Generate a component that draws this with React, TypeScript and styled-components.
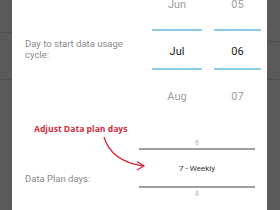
import React from "react";
import styled, { createGlobalStyle } from "styled-components";

const Global = createGlobalStyle`
  html, body { margin: 0; padding: 0; width: 280px; height: 210px; overflow: hidden; }
  body { font-family: Roboto, "Liberation Sans", sans-serif; }
`;

const Page = styled.div`
  display: flex;
  width: 280px;
  height: 210px;
`;

const Strip = styled.div<{ $w: number; $l1: number }>`
  width: ${(p) => p.$w}px;
  flex-shrink: 0;
  background:
    linear-gradient(#4f4f4f, #4f4f4f) 0 ${(p) => p.$l1}px / 100% 1px no-repeat,
    linear-gradient(#4f4f4f, #4f4f4f) 0 79px / 100% 1px no-repeat,
    #5a5a5a;
`;

const Content = styled.div`
  flex: 1;
  background: #ffffff;
  display: flex;
  flex-direction: column;
  position: relative;
  overflow: hidden;
`;

const Row = styled.div`
  display: flex;
  align-items: flex-start;
  padding-left: 13px;
`;

const Label = styled.div<{ $w: number; $top: number }>`
  width: ${(p) => p.$w}px;
  margin-top: ${(p) => p.$top}px;
  font-size: 9.5px;
  line-height: 11px;
  color: #8a8a8a;
  flex-shrink: 0;
`;

const Pickers = styled.div`
  display: flex;
  gap: 12px;
`;

const Column = styled.div<{ $w: number }>`
  width: ${(p) => p.$w}px;
  display: flex;
  flex-direction: column;
  margin-top: -21px;
`;

const Item = styled.div<{ $h: number; $sel?: boolean; $pt?: number }>`
  height: ${(p) => p.$h}px;
  box-sizing: border-box;
  padding-top: ${(p) => p.$pt ?? 0}px;
  display: flex;
  align-items: center;
  justify-content: center;
  font-size: 11px;
  color: ${(p) => (p.$sel ? "#1a1a1a" : "#9e9e9e")};
`;

const BlueLine = styled.div`
  height: 2px;
  background: #8ccbe4;
`;

const NumberPicker = styled.div`
  width: 116px;
  margin-top: 16px;
  display: flex;
  flex-direction: column;
`;

const NumItem = styled.div<{ $h: number; $sel?: boolean; $pt?: number }>`
  height: ${(p) => p.$h}px;
  box-sizing: border-box;
  padding-top: ${(p) => p.$pt ?? 0}px;
  display: flex;
  align-items: center;
  justify-content: center;
  font-weight: 400;
  font-size: ${(p) => (p.$sel ? 8 : 7)}px;
  color: ${(p) => (p.$sel ? "#333333" : "#b0b0b0")};
`;

const GreyLine = styled.div`
  height: 1.5px;
  background: #9e9e9e;
`;

const Note = styled.div`
  position: absolute;
  left: 22px;
  top: 124px;
  font-family: "Open Sans", "Liberation Sans", sans-serif;
  font-weight: 700;
  font-size: 8.6px;
  line-height: 10px;
  color: #d42a3c;
  white-space: nowrap;
`;

const ArrowSvg = styled.svg`
  position: absolute;
  left: 0;
  top: 0;
  pointer-events: none;
`;

export default function App() {
  return (
    <>
      <Global />
      <Page>
        <Strip $w={12} $l1={32} />
        <Content>
          <Row>
            <Label $w={127} $top={38}>
              Day to start data usage
              <br />
              cycle:
            </Label>
            <Pickers>
              <Column $w={50}>
                <Item $h={50}>Jun</Item>
                <BlueLine />
                <Item $h={37} $pt={3} $sel>
                  Jul
                </Item>
                <BlueLine />
                <Item $h={52}>Aug</Item>
              </Column>
              <Column $w={47}>
                <Item $h={50}>05</Item>
                <BlueLine />
                <Item $h={37} $pt={3} $sel>
                  06
                </Item>
                <BlueLine />
                <Item $h={52}>07</Item>
              </Column>
            </Pickers>
          </Row>
          <Row>
            <Label $w={114} $top={51}>
              Data Plan days:
            </Label>
            <NumberPicker>
              <NumItem $h={10}>6</NumItem>
              <GreyLine />
              <NumItem $h={36.5} $pt={2} $sel>
                7 - Weekly
              </NumItem>
              <GreyLine />
              <NumItem $h={13}>8</NumItem>
            </NumberPicker>
          </Row>
          <Note>Adjust Data plan days</Note>
          <ArrowSvg width="255" height="210" viewBox="0 0 255 210">
            <path
              d="M92 137 Q99 161 131 166"
              fill="none"
              stroke="#d42a3c"
              strokeWidth="1.3"
            />
            <path
              d="M125 161.5 L132 166 L125 170"
              fill="none"
              stroke="#d42a3c"
              strokeWidth="1.3"
            />
          </ArrowSvg>
        </Content>
        <Strip $w={13} $l1={41} />
      </Page>
    </>
  );
}
